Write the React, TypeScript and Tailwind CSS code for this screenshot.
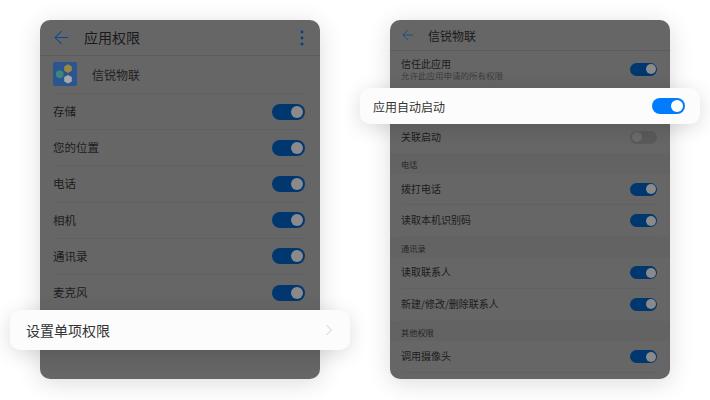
const font = "font-['Noto_Sans_CJK_SC','Noto_Sans',sans-serif]";

function Toggle({ small = false }: { small?: boolean }) {
  return small ? (
    <div className="flex h-[13px] w-[27px] items-center justify-end rounded-full bg-[#00376f] pr-[1.5px]">
      <div className="h-[10px] w-[10px] rounded-full bg-[#8a8a8a]" />
    </div>
  ) : (
    <div className="flex h-4 w-[33px] items-center justify-end rounded-full bg-[#00376f] pr-[2px]">
      <div className="h-3 w-3 rounded-full bg-[#8a8a8a]" />
    </div>
  );
}

function LeftRow({ label, last = false }: { label: string; last?: boolean }) {
  return (
    <div className="mx-[13px] flex h-[36.2px] items-center">
      <div className={`flex h-full flex-1 items-center justify-between pr-[2px] ${last ? "" : "border-b border-[#616161]"}`}>
        <span className="text-[11.5px] text-[#1c1c1c]">{label}</span>
        <Toggle />
      </div>
    </div>
  );
}

function RightRow({ label }: { label: string }) {
  return (
    <div className="mx-[11px] flex h-[31.6px] items-center justify-between border-b border-[#616161] pr-[2px]">
      <span className="pb-[2px] text-[10px] text-[#1c1c1c]">{label}</span>
      <Toggle small />
    </div>
  );
}

function Section({ label }: { label: string }) {
  return (
    <div className="flex h-[20.5px] items-center bg-[#636363] px-[11px] pt-[2px] text-[8.2px] text-[#262626]">{label}</div>
  );
}

function Back({ size }: { size: number }) {
  return (
    <svg width={size} height={size} viewBox="0 0 16 16" fill="none" stroke="#0a4a90" strokeWidth="1.1">
      <path d="M15 8H1.5M8 1.2 1.2 8 8 14.8" />
    </svg>
  );
}

export default function App() {
  return (
    <div className={`relative flex h-[400px] w-[710px] gap-[70px] overflow-hidden bg-white pl-10 pt-5 ${font}`}>
      <div className="h-[359px] w-[280px] overflow-hidden rounded-[10px] bg-[#666666] shadow-[0_4px_24px_rgba(0,0,0,0.14)]">
        <div className="flex h-9 items-center border-b border-[#5c5c5c] pl-[14px] pr-4">
          <Back size={15} />
          <span className="ml-[15px] pb-[1px] text-sm text-[#1a1a1a]">应用权限</span>
          <svg className="ml-auto" width="4" height="16" viewBox="0 0 4 16" fill="#003f85">
            <circle cx="2" cy="2" r="1.4" />
            <circle cx="2" cy="8" r="1.4" />
            <circle cx="2" cy="14" r="1.4" />
          </svg>
        </div>
        <div className="mx-[13px] flex h-[38px] items-center border-b border-[#616161]">
          <svg width="24" height="24" viewBox="0 0 24 24" className="shrink-0 -translate-y-[1px]">
            <rect width="24" height="24" rx="2" fill="#2a5590" />
            <path d="M15 2.300 18.800 4.500V8.800L15 11 11.200 8.800V4.500Z" fill="#99893f" />
            <path d="M6.700 8 10.400 10.100V14.400L6.700 16.600 3 14.400V10.100Z" fill="#3f8578" />
            <path d="M15 13 18.800 15.100V19.400L15 21.600 11.200 19.400V15.100Z" fill="#a8a8a8" />
          </svg>
          <span className="ml-[15px] text-xs text-[#1f1f1f]">信锐物联</span>
        </div>
        <LeftRow label="存储" />
        <LeftRow label="您的位置" />
        <LeftRow label="电话" />
        <LeftRow label="相机" />
        <LeftRow label="通讯录" />
        <LeftRow label="麦克风" last />
      </div>

      <div className="h-[359px] w-[280px] overflow-hidden rounded-[10px] bg-[#666666] shadow-[0_4px_24px_rgba(0,0,0,0.14)]">
        <div className="flex h-[31px] items-center border-b border-[#5c5c5c] pl-[12px]">
          <Back size={12} />
          <span className="ml-[14px] pt-[1px] text-xs text-[#1a1a1a]">信锐物联</span>
        </div>
        <div className="mx-[11px] flex h-[36px] items-center justify-between pr-[2px]">
          <div className="flex flex-col">
            <span className="text-[10px] leading-[13px] text-[#1c1c1c]">信任此应用</span>
            <span className="text-[8.5px] leading-[11px] text-[#3d3d3d]">允许此应用申请的所有权限</span>
          </div>
          <Toggle small />
        </div>
        <div className="h-[34px]" />
        <div className="mx-[11px] flex h-[32.4px] items-center justify-between pr-[2px]">
          <span className="pb-[2px] text-[10px] text-[#1c1c1c]">关联启动</span>
          <div className="flex h-[13px] w-[27px] items-center rounded-full bg-[#5a5a5a] pl-[1.5px]">
            <div className="h-[10px] w-[10px] rounded-full bg-[#6b6b6b]" />
          </div>
        </div>
        <Section label="电话" />
        <RightRow label="拨打电话" />
        <RightRow label="读取本机识别码" />
        <Section label="通讯录" />
        <RightRow label="读取联系人" />
        <RightRow label="新建/修改/删除联系人" />
        <Section label="其他权限" />
        <RightRow label="调用摄像头" />
      </div>

      <div className="absolute left-[10px] top-[310px] flex h-10 w-[340px] items-center justify-between rounded-[10px] bg-[#fcfcfc] pl-4 pr-[17px] shadow-[0_4px_20px_rgba(0,0,0,0.14)]">
        <span className="text-sm text-[#333333]">设置单项权限</span>
        <svg width="8" height="12" viewBox="0 0 8 12" fill="none" stroke="#cfcfcf" strokeWidth="1">
          <path d="M1.500 1l5 5-5 5" />
        </svg>
      </div>

      <div className="absolute left-[360px] top-[88px] flex h-9 w-[340px] items-center justify-between rounded-[10px] bg-[#fcfcfc] pl-[13px] pr-[15px] shadow-[0_4px_20px_rgba(0,0,0,0.14)]">
        <span className="pt-[1px] text-xs text-[#333333]">应用自动启动</span>
        <div className="flex h-4 w-[33px] items-center justify-end rounded-full bg-[#007dff] pr-[2px]">
          <div className="h-3 w-3 rounded-full bg-white" />
        </div>
      </div>
    </div>
  );
}
